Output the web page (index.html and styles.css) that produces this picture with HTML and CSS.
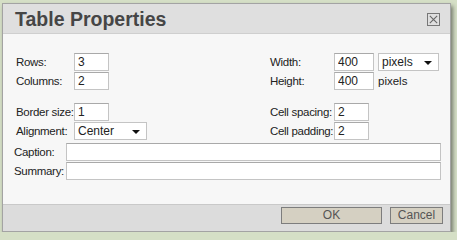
FILE: index.html
```html
<!DOCTYPE html>
<html lang="en">
<head>
  <meta charset="UTF-8">
  <title>Table Properties</title>
  <link rel="stylesheet" href="styles.css">
</head>
<body>
  <div class="dialog">
    <div class="dialog-header">
      <h1>Table Properties</h1>
      <span class="close-btn">
        <svg width="12" height="12" viewBox="0 0 12 12"><path d="M2 2 L10 10 M10 2 L2 10" stroke="#666" stroke-width="1.2"/></svg>
      </span>
    </div>

    <div class="dialog-body">
      <div class="columns">
        <div class="col col-left">
          <div class="group">
            <div class="field"><label>Rows:</label><input class="small" type="text" value="3"></div>
            <div class="field"><label>Columns:</label><input class="small" type="text" value="2"></div>
          </div>
          <div class="group">
            <div class="field"><label>Border size:</label><input class="small" type="text" value="1"></div>
            <div class="field"><label>Alignment:</label>
              <div class="select align-select"><span>Center</span><i class="caret"></i></div>
            </div>
          </div>
        </div>

        <div class="col col-right">
          <div class="group">
            <div class="field"><label>Width:</label><input class="medium" type="text" value="400">
              <div class="select unit-select"><span>pixels</span><i class="caret"></i></div>
            </div>
            <div class="field"><label>Height:</label><input class="medium" type="text" value="400"><span class="unit">pixels</span></div>
          </div>
          <div class="group">
            <div class="field"><label>Cell spacing:</label><input class="small" type="text" value="2"></div>
            <div class="field"><label>Cell padding:</label><input class="small" type="text" value="2"></div>
          </div>
        </div>
      </div>

      <div class="wide-fields">
        <div class="field"><label>Caption:</label><input class="wide" type="text" value=""></div>
        <div class="field"><label>Summary:</label><input class="wide" type="text" value=""></div>
      </div>
    </div>

    <div class="dialog-footer">
      <button class="btn btn-ok">OK</button>
      <button class="btn btn-cancel">Cancel</button>
    </div>
  </div>
</body>
</html>
```

FILE: styles.css
```css
body {
  margin: 0;
  background: #d5dfc6;
  font-family: "Liberation Sans", Arial, sans-serif;
  font-size: 12px;
  color: #222;
}
.dialog {
  margin: 3px 0 0 2px;
  width: 447px;
  border: 1px solid #a3a3a3;
  background: #f7f7f7;
  box-shadow: 2px 3px 4px rgba(0,0,0,0.45);
}
.dialog-header {
  height: 29px;
  background: #dfdfdf;
  border-bottom: 1px solid #cfcfcf;
  display: flex;
  align-items: center;
  justify-content: space-between;
  padding: 0 10px 0 12px;
}
.dialog-header h1 {
  margin: 0;
  font-size: 19.5px;
  font-weight: bold;
  color: #464646;
  padding-top: 1px;
}
.close-btn {
  width: 11px;
  height: 11px;
  border: 1px solid #777;
  display: flex;
  align-items: center;
  justify-content: center;
  margin-top: 2px;
}
.close-btn svg {
  width: 11px;
  height: 11px;
}
.dialog-body {
  padding: 19px 8px 23px 11px;
}
.columns {
  display: flex;
}
.col-left {
  width: 254px;
  padding-left: 2px;
}
.col-left label {
  width: 58px;
}
.col-right label {
  width: 64px;
}
.group + .group {
  margin-top: 13px;
}
.field {
  display: flex;
  align-items: center;
  height: 18px;
  margin-bottom: 1px;
}
label {
  flex: none;
  white-space: nowrap;
  font-size: 11.5px;
  letter-spacing: -0.3px;
}
input {
  box-sizing: border-box;
  height: 18px;
  border: 1px solid #c4c4c4;
  border-top-color: #a9a9a9;
  background: #fff;
  font-family: inherit;
  font-size: 12px;
  color: #222;
  padding: 0 3px;
  margin: 0;
}
input.small { width: 35px; }
input.medium { width: 40px; }
input.wide { width: 375px; }
.select {
  box-sizing: border-box;
  height: 18px;
  border: 1px solid #c4c4c4;
  background: #fff;
  display: flex;
  align-items: center;
  justify-content: space-between;
  padding: 0 6px 0 3px;
}
.align-select { width: 73px; }
.unit-select { width: 61px; margin-left: 4px; }
.caret {
  width: 0;
  height: 0;
  border-left: 4px solid transparent;
  border-right: 4px solid transparent;
  border-top: 4px solid #111;
  margin-top: 2px;
}
.unit {
  margin-left: 4px;
  font-size: 11.5px;
}
.wide-fields {
  margin-top: 2px;
}
.wide-fields label {
  width: 52px;
}
.wide-fields .field + .field {
  margin-top: 1px;
}
.dialog-footer {
  box-sizing: border-box;
  height: 27px;
  background: #dcdcdc;
  border-top: 1px solid #c9c9c9;
  display: flex;
  justify-content: flex-end;
  align-items: flex-start;
  padding: 2px 7px 0 0;
}
.btn {
  height: 17px;
  border: 1px solid #7d7d7d;
  background: #d5d0c2;
  font-family: inherit;
  font-size: 12px;
  color: #555;
  padding: 0;
  line-height: 15px;
}
.btn-ok { width: 101px; }
.btn-cancel { width: 53px; margin-left: 8px; }
```
